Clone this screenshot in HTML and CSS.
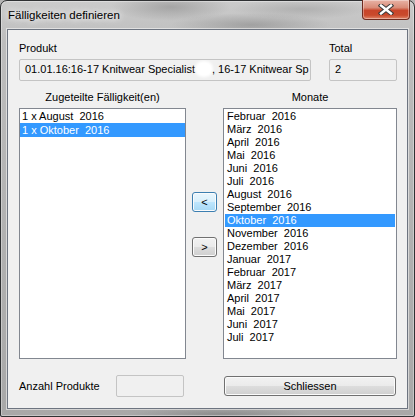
FILE: index.html
```html
<!DOCTYPE html>
<html lang="de">
<head>
  <meta charset="UTF-8">
  <title>Fälligkeiten definieren</title>
  <link rel="stylesheet" href="styles.css">
</head>
<body>

  <div class="window">
    <div class="titlebar">
      <span class="title">Fälligkeiten definieren</span>
      <div class="close-btn">
        <svg width="16" height="11" viewBox="0 0 16 11">
          <path d="M3 1.5 L13 9.5 M13 1.5 L3 9.5" stroke="#3a3a3a" stroke-width="4.4" stroke-linecap="square" fill="none"/>
          <path d="M3 1.5 L13 9.5 M13 1.5 L3 9.5" stroke="#ffffff" stroke-width="2.4" stroke-linecap="square" fill="none"/>
        </svg>
      </div>
    </div>

    <div class="client">
      <div class="top-row">
        <div class="field">
          <label>Produkt</label>
          <div class="textbox">01.01.16:16-17 Knitwear Specialist<span class="smudge"></span>, 16-17 Knitwear Sp</div>
        </div>
        <div class="field">
          <label>Total</label>
          <div class="textbox">2</div>
        </div>
      </div>

      <div class="lists-row">
        <div class="list-col">
          <div class="list-title">Zugeteilte Fälligkeit(en)</div>
          <ul class="listbox assigned" id="assignedList"></ul>
        </div>

        <div class="move-buttons">
          <button class="btn btn-hot">&lt;</button>
          <button class="btn">&gt;</button>
        </div>

        <div class="list-col">
          <div class="list-title">Monate</div>
          <ul class="listbox months" id="monthList"></ul>
        </div>
      </div>

      <div class="bottom-row">
        <label>Anzahl Produkte</label>
        <div class="textbox"></div>
        <span></span>
        <button class="btn">Schliessen</button>
      </div>
    </div>
  </div>

  <script>
    const assigned = ['1 x August  2016', '1 x Oktober  2016'];
    const months = [
      'Februar  2016', 'März  2016', 'April  2016', 'Mai  2016', 'Juni  2016', 'Juli  2016',
      'August  2016', 'September  2016', 'Oktober  2016', 'November  2016', 'Dezember  2016',
      'Januar  2017', 'Februar  2017', 'März  2017', 'April  2017', 'Mai  2017', 'Juni  2017', 'Juli  2017'
    ];

    function renderList(id, items, selected) {
      const list = document.getElementById(id);
      items.forEach((text, index) => {
        const li = document.createElement('li');
        li.textContent = text;
        if (index === selected) li.className = 'selected';
        list.appendChild(li);
      });
    }

    renderList('assignedList', assigned, 1);
    renderList('monthList', months, 8);
  </script>

</body>
</html>
```

FILE: styles.css
```css
* {
  box-sizing: border-box;
}

body {
  margin: 0;
  font-family: "Liberation Sans", Arial, sans-serif;
  font-size: 11px;
  color: #000;
  background: #b4b4b4;
}

/* window frame */
.window {
  position: relative;
  width: 415px;
  height: 417px;
  border: 1px solid #2f3133;
  border-radius: 7px 7px 2px 2px;
  background:
    radial-gradient(ellipse 60px 14px at 170px 6px, rgba(120,120,120,.45), transparent),
    radial-gradient(ellipse 80px 12px at 250px 24px, rgba(110,110,110,.4), transparent),
    radial-gradient(ellipse 70px 10px at 300px 8px, rgba(140,140,140,.4), transparent),
    radial-gradient(ellipse 90px 6px at 220px 413px, rgba(110,110,110,.45), transparent),
    linear-gradient(to bottom, #cbcbcb 0%, #bdbdbd 10%, #b0b0b0 60%, #a8a8a8 100%);
  box-shadow: inset 0 0 0 1px rgba(255,255,255,.35);
}

.titlebar {
  height: 28px;
  padding-left: 7px;
  display: flex;
  align-items: center;
}

.title {
  font-size: 11.5px;
  color: #000;
  text-shadow: 0 0 6px #fff, 0 0 10px #fff;
}

.close-btn {
  position: absolute;
  top: -1px;
  right: 4px;
  width: 48px;
  height: 20px;
  border: 1px solid #6e2c20;
  border-top: none;
  border-radius: 0 0 4px 4px;
  background: linear-gradient(to bottom, #e8b3a6 0%, #d98c78 40%, #c8452a 55%, #c94a2c 80%, #e0876a 100%);
  box-shadow: inset 0 0 0 1px rgba(255,255,255,.35);
  display: flex;
  align-items: center;
  justify-content: center;
}

/* client area */
.client {
  height: 380px;
  margin: 0 6px;
  border: 1px solid #6d7480;
  background: #f0f0f0;
  padding: 12px 10px 0 11px;
  box-shadow: 0 0 0 1px rgba(255,255,255,.5);
}

.top-row {
  display: grid;
  grid-template-columns: 292px 68px;
  column-gap: 18px;
}

.field label {
  display: block;
  line-height: 13px;
  margin-bottom: 4px;
}

.textbox {
  height: 22px;
  border: 1px solid #c4c4c4;
  border-radius: 2px;
  background: #f0f0f0;
  padding-left: 5px;
  line-height: 18px;
  white-space: nowrap;
  overflow: hidden;
}

.smudge {
  display: inline-block;
  width: 14px;
  height: 12px;
  margin: 0 1px 0 2px;
  vertical-align: -2px;
  background: #fff;
  border-radius: 6px;
  box-shadow: 0 0 3px 2px #fff;
}

/* list boxes */
.lists-row {
  margin-top: 10px;
  display: grid;
  grid-template-columns: 167px 37px 174px;
}

.list-title {
  text-align: center;
  line-height: 13px;
  margin-bottom: 4px;
}

.listbox {
  height: 251px;
  margin: 0;
  padding: 0;
  list-style: none;
  border: 1px solid #828790;
  background: #fff;
  overflow: hidden;
}

.listbox li {
  padding-left: 2px;
  white-space: pre;
}

.assigned li {
  line-height: 14px;
}

.months {
  padding: 1px;
}

.months li {
  line-height: 13px;
}

.listbox li.selected {
  background: #3399ff;
  color: #fff;
}

.move-buttons {
  display: flex;
  flex-direction: column;
  align-items: center;
  gap: 25px;
  padding-top: 101px;
}

.move-buttons .btn {
  width: 25px;
  height: 20px;
}

/* buttons */
.btn {
  font-family: "Liberation Sans", Arial, sans-serif;
  font-size: 11px;
  color: #000;
  padding: 0;
  border: 1px solid #707070;
  border-radius: 3px;
  background: linear-gradient(to bottom, #f2f2f2 0%, #ebebeb 48%, #dddddd 52%, #cfcfcf 100%);
  box-shadow: inset 0 0 0 1px #fbfbfb;
}

.btn-hot {
  border-color: #3c7fb1;
  background: linear-gradient(to bottom, #eaf6fd 0%, #d9f0fc 48%, #bee6fd 52%, #a7d9f5 100%);
}

.bottom-row {
  margin-top: 16px;
  display: grid;
  grid-template-columns: 97px 68px 40px 172px;
  align-items: center;
}

.bottom-row label {
  line-height: 13px;
}

.bottom-row .btn {
  height: 20px;
}
```
